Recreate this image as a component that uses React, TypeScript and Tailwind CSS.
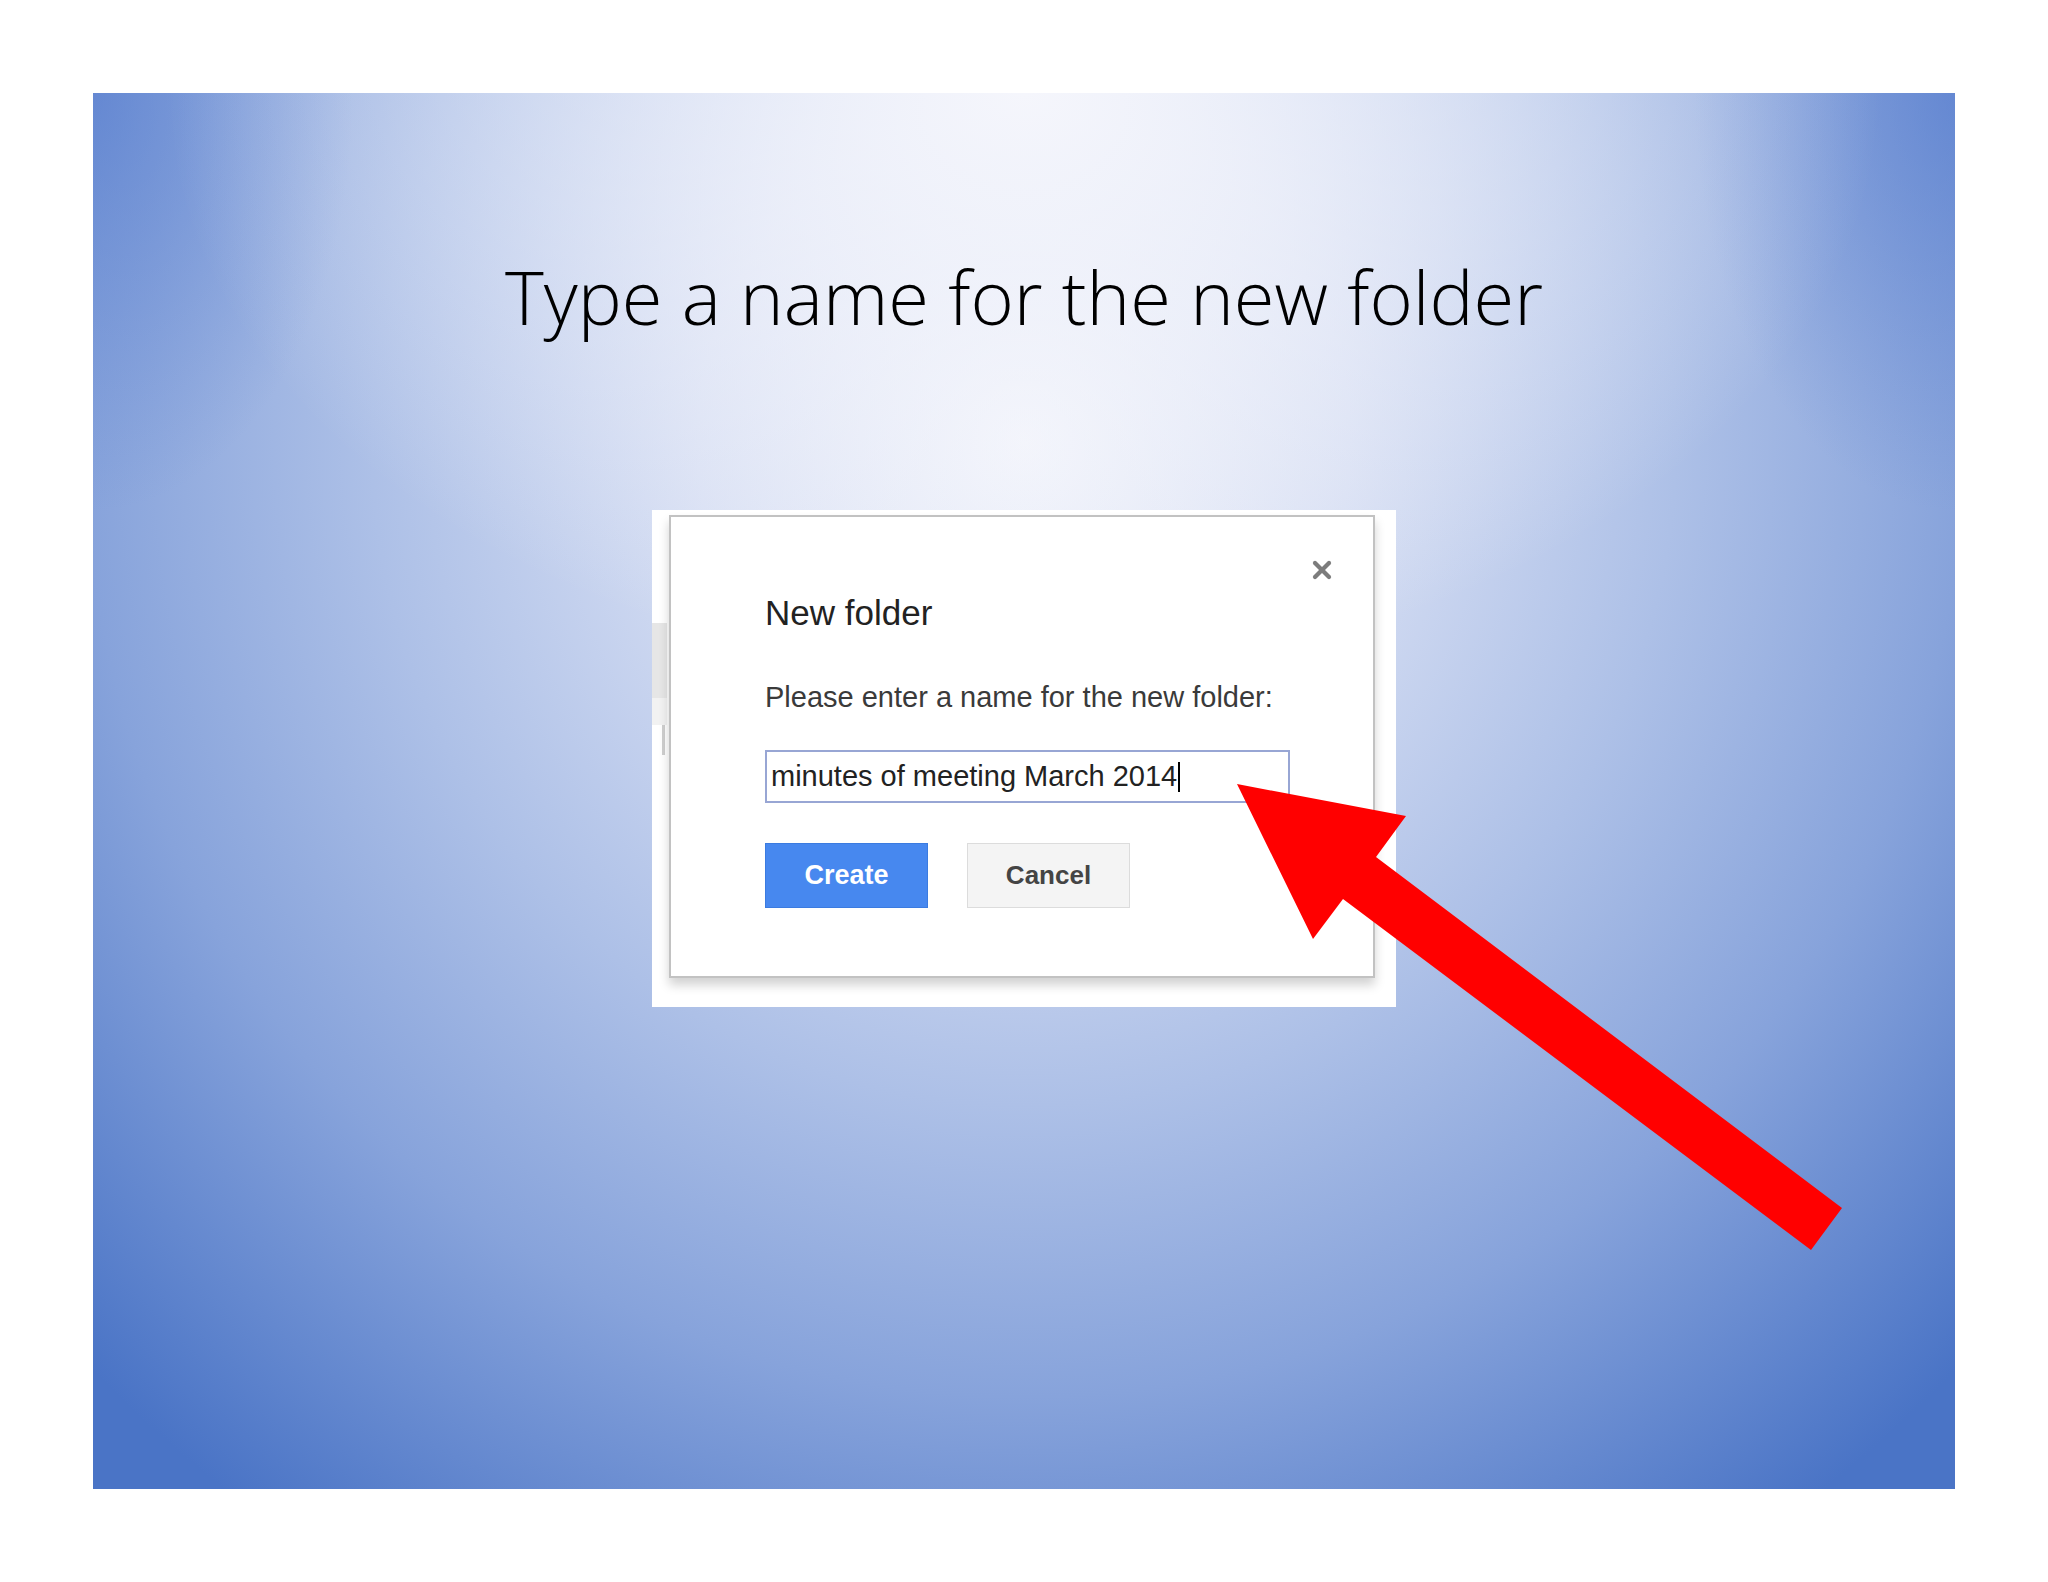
import { X } from 'lucide-react';

// Slide background: light glow at top centre fading to blue at the edges
const slideBg =
  'bg-[image:radial-gradient(ellipse_46%_42%_at_50%_0%,rgba(245,246,252,1)_0%,rgba(245,246,252,0)_100%),radial-gradient(ellipse_14%_30%_at_0%_0%,rgba(80,120,205,0.55)_0%,rgba(80,120,205,0)_100%),radial-gradient(ellipse_14%_30%_at_100%_0%,rgba(80,120,205,0.55)_0%,rgba(80,120,205,0)_100%),radial-gradient(ellipse_70%_95%_at_50%_25%,#f2f4fb_0%,#d6def3_25%,#adc0e7_50%,#87a3db_72%,#4a74c6_100%)]';

function Arrow() {
  return (
    <svg
      className="absolute inset-0 pointer-events-none"
      width={2048}
      height={1582}
      viewBox="0 0 2048 1582"
    >
      <polygon
        points="1237,784 1406,816 1376,857 1842,1208 1811,1250 1343,899 1313,939"
        fill="#ff0000"
      />
    </svg>
  );
}

function FolderDialog() {
  return (
    <div className="w-[744px] h-[497px] bg-white flex pt-[5px]">
      {/* leftover edge of the page behind the dialog */}
      <div className="w-[17px] flex flex-col pt-[108px]">
        <div className="w-[15px] h-[75px] bg-[#e6e6e6]" />
        <div className="w-[15px] h-[27px] bg-[#f2f2f2]" />
        <div className="ml-[10px] w-[3px] h-[30px] bg-[#cfcfcf]" />
      </div>

      <div
        className="w-[706px] h-[463px] bg-white border-2 border-[#c2c2c2] shadow-[0_7px_10px_rgba(0,0,0,0.18)] flex flex-col pl-[94px] pr-[37px] pt-[39px]"
        style={{ fontFamily: "'Liberation Sans', Arial, sans-serif" }}
      >
        <div className="h-[24px] flex justify-end">
          <X size={28} strokeWidth={3.6} className="text-[#7c7c7c]" />
        </div>

        <h2 className="mt-[15px] text-[35px] leading-none text-[#222]">New folder</h2>

        <p className="mt-[53px] text-[29px] leading-none text-[#3a3a3a]">
          Please enter a name for the new folder:
        </p>

        <div className="mt-[38px] w-[525px] h-[53px] border-2 border-[#98a6d4] flex items-center pl-[4px]">
          <span className="text-[29px] leading-none text-[#222]">minutes of meeting March 2014</span>
          <span className="ml-[1px] w-[2px] h-[30px] bg-black" />
        </div>

        <div className="mt-[40px] flex gap-[39px]">
          <button className="w-[163px] h-[65px] bg-[#4788ef] border border-[#3b7be0] text-white text-[27px] font-bold">
            Create
          </button>
          <button className="w-[163px] h-[65px] bg-[#f4f4f4] border border-[#dcdcdc] text-[#444] text-[26px] font-bold">
            Cancel
          </button>
        </div>
      </div>
    </div>
  );
}

export default function App() {
  return (
    <div className="relative w-[2048px] h-[1582px] bg-white p-[93px]">
      <div className={`w-[1862px] h-[1396px] ${slideBg} flex flex-col items-center pt-[167px]`}>
        <h1
          className="text-[74px] leading-none font-light text-black"
          style={{ fontFamily: "'Open Sans', 'Noto Sans', sans-serif" }}
        >
          Type a name for the new folder
        </h1>

        <div className="mt-[176px]">
          <FolderDialog />
        </div>
      </div>

      <Arrow />
    </div>
  );
}
